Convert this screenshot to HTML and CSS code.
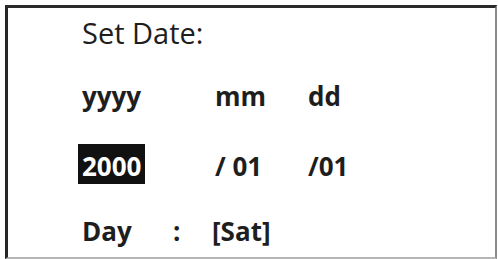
FILE: index.html
```html
<!DOCTYPE html>
<html>
<head>
<meta charset="utf-8">
<link rel="stylesheet" href="styles.css">
</head>
<body>
<div class="screen">
  <div class="title">Set Date:</div>
  <div class="grid">
    <div class="cell">yyyy</div>
    <div class="cell">mm</div>
    <div class="cell">dd</div>
    <div class="cell"><span class="sel">2000</span></div>
    <div class="cell">/ 01</div>
    <div class="cell">/01</div>
  </div>
  <div class="day">
    <span class="day-label">Day</span>
    <span class="day-colon">:</span>
    <span class="day-val">[Sat]</span>
  </div>
</div>
</body>
</html>
```
FILE: styles.css
```css
html, body {
  margin: 0;
  padding: 0;
  background: #fff;
}
body {
  width: 498px;
  height: 259px;
  overflow: hidden;
  font-family: "Open Sans", "DejaVu Sans", sans-serif;
  color: #1e1e1e;
}
.screen {
  box-sizing: border-box;
  margin: 5px 0 0 5px;
  width: 492px;
  height: 254px;
  border-left: 3px solid #262626;
  border-top: 3px solid #2a2a2a;
  border-right: 2px solid #8a8a8a;
  border-bottom: 2px solid #b5b5b5;
  padding-left: 74px;
}
.title {
  font-size: 29px;
  line-height: 38px;
  margin-top: 6px;
}
.grid {
  display: grid;
  grid-template-columns: 133px 93px auto;
  grid-template-rows: 70px 36px;
  margin-top: 26px;
  font-weight: 700;
  font-size: 26px;
  line-height: 36px;
}
.sel {
  background: #111;
  color: #fff;
  padding: 4px 4px 0 4px;
  margin-left: -4px;
}
.day {
  display: flex;
  font-weight: 700;
  font-size: 26px;
  line-height: 36px;
  margin-top: 29px;
}
.day-label { width: 91px; }
.day-colon { width: 39px; }
```
